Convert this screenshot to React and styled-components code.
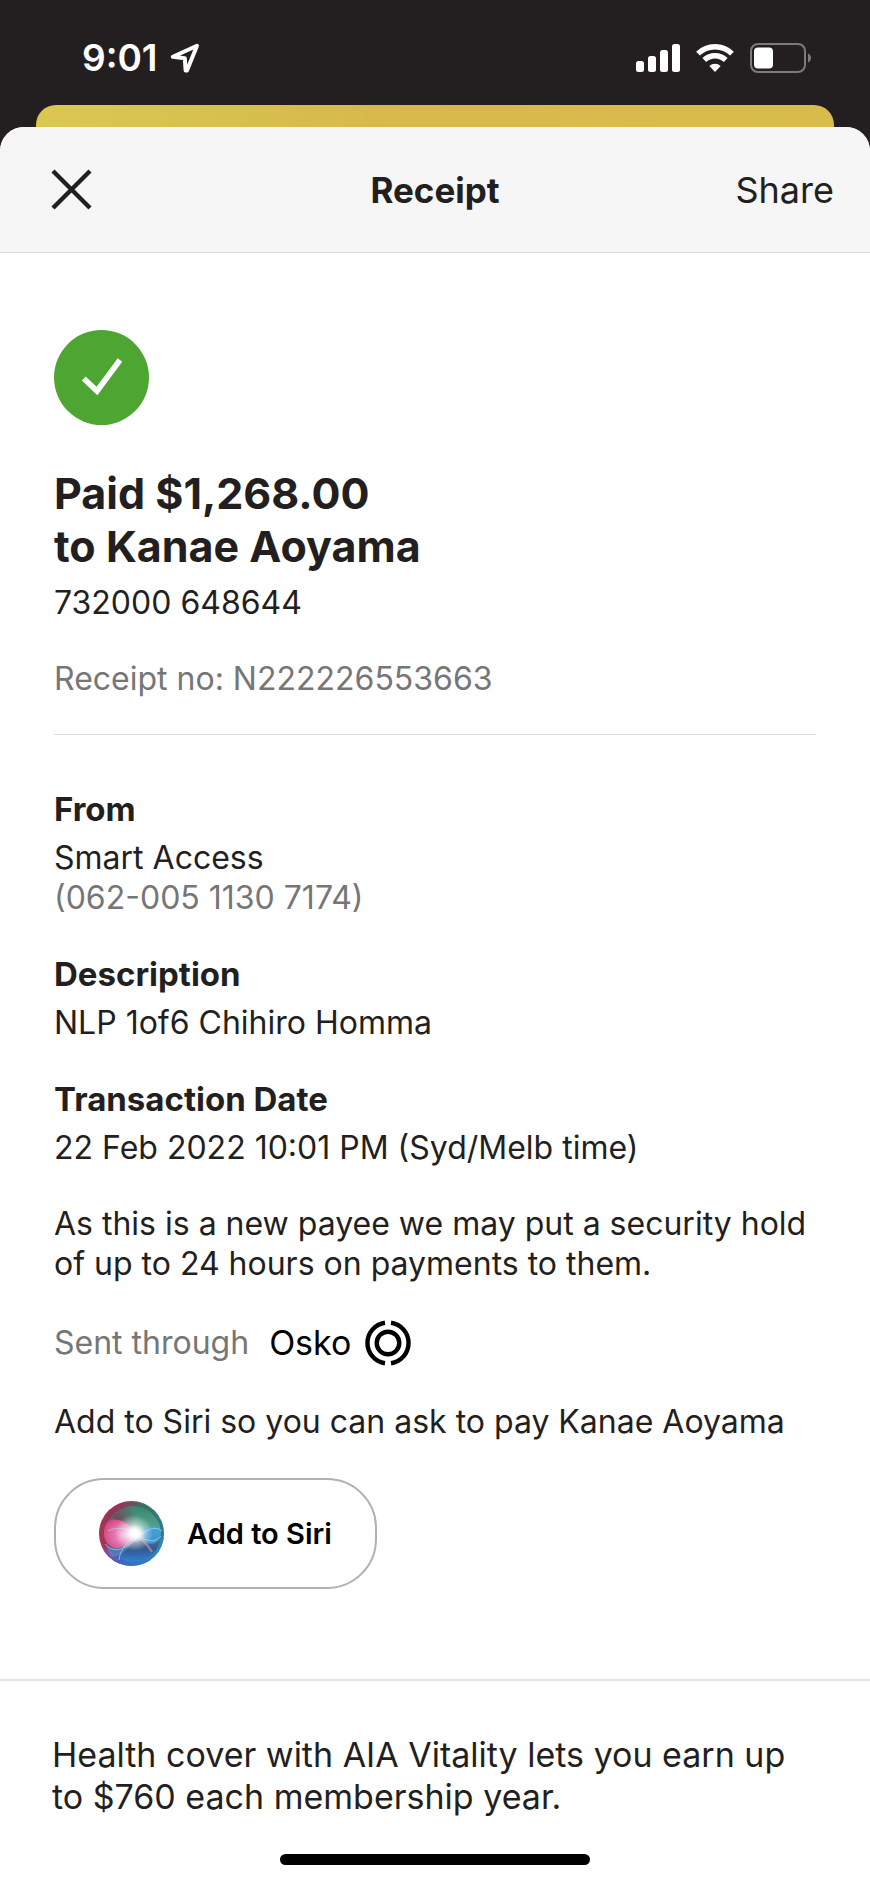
import React from "react";
import styled, { createGlobalStyle } from "styled-components";

const GlobalStyle = createGlobalStyle`
  *, *::before, *::after { box-sizing: border-box; }
  body {
    margin: 0;
    background: #231f20;
    color: #231f20;
    font-family: Inter, "Liberation Sans", sans-serif;
    font-size: 32px;
    line-height: 40px;
  }
  h1, h2, p, dl, dt, dd { margin: 0; }
  button, a { font: inherit; color: inherit; }
  svg { display: block; flex: none; }
`;

const Page = styled.div`
  display: flex;
  flex-direction: column;
  min-height: 100vh;
`;

const StatusBar = styled.div`
  display: flex;
  justify-content: space-between;
  align-items: center;
  height: 105px;
  padding: 11px 58px 0 82px;
  color: #fff;
`;

const StatusGroup = styled.div`
  display: flex;
  align-items: center;
  gap: ${(p) => p.$gap}px;
`;

const Clock = styled.time`
  font-size: 37px;
  font-weight: 600;
`;

const BackCard = styled.div`
  height: 22px;
  margin: 0 36px;
  border-radius: 20px 20px 0 0;
  background: linear-gradient(100deg, #dac750 0%, #d7c04e 25%, #d7b94b 42%, #d8bc4b 100%);
`;

const Sheet = styled.main`
  display: flex;
  flex-direction: column;
  flex: 1;
  border-radius: 24px 24px 0 0;
  background: #fff;
  overflow: hidden;
`;

const NavBar = styled.header`
  display: grid;
  grid-template-columns: 1fr auto 1fr;
  align-items: center;
  height: 126px;
  padding: 0 36px;
  background: #f6f6f6;
  border-bottom: 1px solid #d9d9d9;
`;

const NavTitle = styled.h1`
  font-size: 35px;
  font-weight: 700;
`;

const PlainButton = styled.button`
  padding: 0;
  border: 0;
  background: none;
  font-size: 36px;
  cursor: pointer;
`;

const CloseButton = styled(PlainButton)`
  justify-self: start;
  margin-left: 14px;
`;

const ShareButton = styled(PlainButton)`
  justify-self: end;
`;

const Content = styled.section`
  padding: 77px 54px 90px;
`;

const SuccessBadge = styled.div`
  display: grid;
  place-items: center;
  width: 95px;
  height: 95px;
  margin-bottom: 42px;
  border-radius: 50%;
  background: #4da632;
`;

const PaidTitle = styled.h2`
  margin-bottom: 10px;
  font-size: 43px;
  line-height: 53px;
  font-weight: 700;
`;

const Muted = styled.p`
  color: #767676;
`;

const ReceiptNumber = styled(Muted)`
  margin-top: 36px;
  padding-bottom: 35px;
  border-bottom: 1px solid #dcdcdc;
`;

const Details = styled.dl`
  display: flex;
  flex-direction: column;
  gap: 36px;
  margin-top: 54px;
`;

const Label = styled.dt`
  margin-bottom: 9px;
  font-size: 33px;
  font-weight: 700;
`;

const Notice = styled.p`
  margin-top: 36px;
`;

const SentRow = styled.div`
  display: flex;
  align-items: center;
  margin: 36px 0;
`;

const OskoName = styled.span`
  margin: 0 14px 0 20px;
  color: #000;
  font-size: 34px;
`;

const SiriButton = styled.button`
  display: flex;
  align-items: center;
  gap: 23px;
  height: 111px;
  margin-top: 36px;
  padding: 0 43px;
  border: 2px solid #b1b1b1;
  border-radius: 50px;
  background: #fff;
  color: #000;
  font-size: 29px;
  font-weight: 600;
  cursor: pointer;
`;

const Promo = styled.footer`
  flex: 1;
  padding: 53px 52px 36px;
  border-top: 2px solid #e4e4e4;
  font-size: 34px;
  line-height: 42px;
`;

const HomeIndicator = styled.div`
  width: 310px;
  height: 11px;
  margin: 0 auto 18px;
  border-radius: 6px;
  background: #000;
`;

const LocationIcon = () => (
  <svg width="30" height="30" viewBox="0 0 30 30" aria-hidden="true">
    <path d="M27 2.8 2.8 13.8 14.8 15.2 15.6 27.400 17 27.400Z" fill="none" stroke="#fff" strokeWidth="4" strokeLinejoin="round" />
  </svg>
);

const SignalIcon = () => (
  <svg width="44" height="28" viewBox="0 0 44 28" fill="#fff" aria-hidden="true">
    <rect x="0" y="17" width="8" height="11" rx="2.500" />
    <rect x="12" y="12" width="8" height="16" rx="2.500" />
    <rect x="24" y="6" width="8" height="22" rx="2.500" />
    <rect x="36" y="0" width="8" height="28" rx="2.500" />
  </svg>
);

const WifiIcon = () => (
  <svg width="38" height="28" viewBox="0 0 38 28" aria-hidden="true">
    <g fill="none" stroke="#fff" strokeWidth="5.400">
      <path d="M2 9.6a24.4 24.4 0 0 1 34 0" />
      <path d="M8.3 16a15.4 15.4 0 0 1 21.4 0" />
    </g>
    <path d="M13.4 21.9a8.2 8.2 0 0 1 11.2 0L19 28Z" fill="#fff" />
  </svg>
);

const BatteryIcon = () => (
  <svg width="62" height="30" viewBox="0 0 62 30" aria-hidden="true">
    <rect x="1" y="1" width="54" height="28" rx="7" fill="none" stroke="#7d7a7b" strokeWidth="2" />
    <path d="M58 10.5c4 1.500 4 7.500 0 9Z" fill="#7d7a7b" />
    <rect x="4" y="4.500" width="19" height="21" rx="4" fill="#fff" />
  </svg>
);

const CloseIcon = () => (
  <svg width="43" height="43" viewBox="0 0 43 43" aria-hidden="true">
    <path d="M3 3 40 40M40 3 3 40" stroke="#231f20" strokeWidth="4.400" />
  </svg>
);

const CheckIcon = () => (
  <svg width="42" height="40" viewBox="0 0 42 40" aria-hidden="true">
    <path d="M2.800 20.500 16 33 39 2" fill="none" stroke="#fff" strokeWidth="5.600" />
  </svg>
);

const OskoIcon = () => (
  <svg width="46" height="46" viewBox="0 0 46 46" fill="none" stroke="#000" strokeWidth="4.400" aria-hidden="true">
    <circle cx="23" cy="23" r="11.300" />
    <path d="M20 2.800A20.400 20.400 0 0 0 20 43.200M26 2.800A20.400 20.400 0 0 1 26 43.200" />
  </svg>
);

const SiriIcon = () => (
  <svg width="65" height="65" viewBox="0 0 65 65" aria-hidden="true">
    <defs>
      <linearGradient id="rim" x1="0" y1="0.250" x2="1" y2="0.650">
        <stop offset="0" stopColor="#b3305a" />
        <stop offset="0.250" stopColor="#9a3858" />
        <stop offset="0.500" stopColor="#39705f" />
        <stop offset="1" stopColor="#2a7d96" />
      </linearGradient>
      <linearGradient id="lower" x1="0" y1="0" x2="1" y2="0">
        <stop offset="0" stopColor="#a83c8c" />
        <stop offset="0.350" stopColor="#3b68c0" />
        <stop offset="1" stopColor="#2c8ab8" />
      </linearGradient>
      <linearGradient id="orb" x1="0.500" y1="0" x2="0.500" y2="1">
        <stop offset="0" stopColor="#39876c" />
        <stop offset="0.400" stopColor="#55aa94" />
        <stop offset="0.650" stopColor="#45628a" />
        <stop offset="0.780" stopColor="#31578f" />
        <stop offset="1" stopColor="#3181d8" />
      </linearGradient>
      <radialGradient id="glow">
        <stop offset="0" stopColor="#fff" />
        <stop offset="0.200" stopColor="#fff" stopOpacity="0.950" />
        <stop offset="0.550" stopColor="#fff" stopOpacity="0.450" />
        <stop offset="1" stopColor="#fff" stopOpacity="0" />
      </radialGradient>
      <radialGradient id="pink" cx="0.600" cy="0.550" r="0.650">
        <stop offset="0" stopColor="#eda0d4" />
        <stop offset="1" stopColor="#d64580" />
      </radialGradient>
      <radialGradient id="shade">
        <stop offset="0" stopColor="#7a3550" stopOpacity="0.800" />
        <stop offset="1" stopColor="#7a3550" stopOpacity="0" />
      </radialGradient>
      <clipPath id="disc"><circle cx="32.500" cy="32.500" r="32.500" /></clipPath>
    </defs>
    <g clipPath="url(#disc)">
      <rect width="65" height="65" fill="url(#rim)" />
      <path d="M2 46C18 56 42 50 65 36V65H0Z" fill="url(#lower)" />
      <circle cx="34" cy="33" r="28" fill="url(#orb)" opacity="0.900" />
      <circle cx="18" cy="18" r="19" fill="url(#shade)" />
      <path d="M38 33C27 17 12 15 7 23C1 36 9 49 20 47C28 46 34 41 38 33Z" fill="url(#pink)" />
      <path d="M38 34C46 24 57 22 62 30C62 40 55 45 48 42C44 40 41 37 38 34Z" fill="#439ee0" opacity="0.850" />
      <path d="M40 36C31 43 26 55 13 56C10 52 8 49 7 44C20 52 28 43 40 36Z" fill="#6a91d8" opacity="0.500" />
      <path d="M9 30C18 25 30 27 39 34C48 41 57 42 62 35M6 43C18 56 30 44 41 35C49 27 57 25 63 30M20 59C21 47 30 40 39 34" fill="none" stroke="#b2e4ef" strokeWidth="1" opacity="0.600" />
      <path d="M39 36Q48 42 53 51" fill="none" stroke="#dc93b3" strokeWidth="2.500" opacity="0.550" />
      <ellipse cx="35" cy="32" rx="19" ry="18" fill="url(#glow)" />
      <ellipse cx="37" cy="33" rx="10" ry="9" fill="url(#glow)" />
    </g>
  </svg>
);

const DETAILS = [
  { label: "From", value: "Smart Access", note: "(062-005 1130 7174)" },
  { label: "Description", value: "NLP 1of6 Chihiro Homma" },
  { label: "Transaction Date", value: "22 Feb 2022 10:01 PM (Syd/Melb time)" },
];

export default function App() {
  return (
    <Page>
      <GlobalStyle />
      <StatusBar>
        <StatusGroup $gap={12}>
          <Clock>9:01</Clock>
          <LocationIcon />
        </StatusGroup>
        <StatusGroup $gap={16}>
          <SignalIcon />
          <WifiIcon />
          <BatteryIcon />
        </StatusGroup>
      </StatusBar>
      <BackCard />
      <Sheet>
        <NavBar>
          <CloseButton type="button" aria-label="Close">
            <CloseIcon />
          </CloseButton>
          <NavTitle>Receipt</NavTitle>
          <ShareButton type="button">Share</ShareButton>
        </NavBar>
        <Content>
          <SuccessBadge>
            <CheckIcon />
          </SuccessBadge>
          <PaidTitle>
            Paid $1,268.00
            <br />
            to Kanae Aoyama
          </PaidTitle>
          <p>732000 648644</p>
          <ReceiptNumber>Receipt no: N222226553663</ReceiptNumber>
          <Details>
            {DETAILS.map((item) => (
              <div key={item.label}>
                <Label>{item.label}</Label>
                <dd>{item.value}</dd>
                {item.note && <Muted as="dd">{item.note}</Muted>}
              </div>
            ))}
          </Details>
          <Notice>As this is a new payee we may put a security hold of up to 24 hours on payments to them.</Notice>
          <SentRow>
            <Muted>Sent through</Muted>
            <OskoName>Osko</OskoName>
            <OskoIcon />
          </SentRow>
          <p>Add to Siri so you can ask to pay Kanae Aoyama</p>
          <SiriButton type="button">
            <SiriIcon />
            Add to Siri
          </SiriButton>
        </Content>
        <Promo>Health cover with AIA Vitality lets you earn up to $760 each membership year.</Promo>
        <HomeIndicator />
      </Sheet>
    </Page>
  );
}
